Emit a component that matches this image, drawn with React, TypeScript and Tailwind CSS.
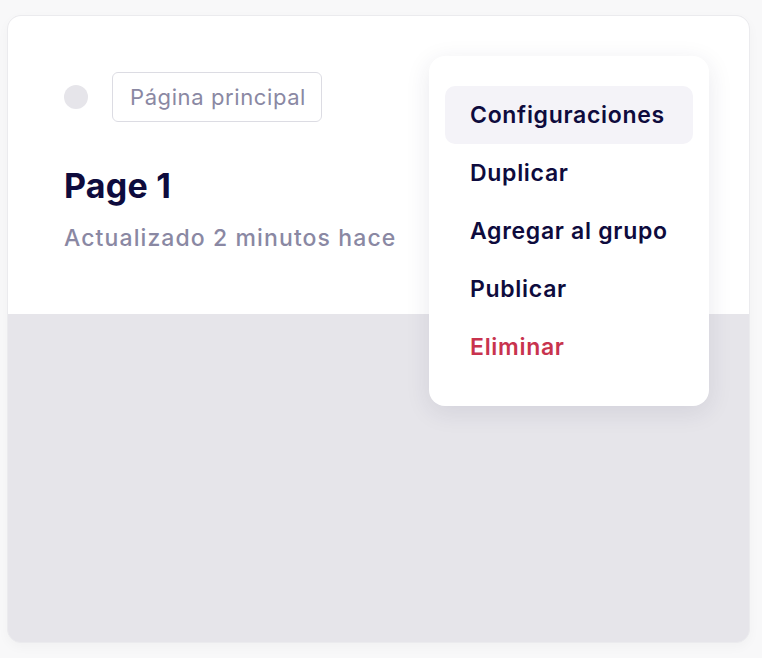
export default function App() {
  const items = [
    { label: "Configuraciones", active: true },
    { label: "Duplicar" },
    { label: "Agregar al grupo" },
    { label: "Publicar" },
    { label: "Eliminar", danger: true },
  ];
  return (
    <div
      className="w-[762px] h-[658px] bg-[#f8f8f9] pt-[15px] pl-[7px]"
      style={{ fontFamily: "Inter, 'Noto Sans', sans-serif" }}
    >
      <div className="relative w-[743px] h-[628px] rounded-[14px] border border-[#ebebee] overflow-hidden flex flex-col bg-[#e6e5ea] shadow-[0_4px_12px_rgba(0,0,0,0.03)]">
        <div className="h-[298px] bg-white pl-[56px] pt-[56px] flex flex-col">
          <div className="flex items-center gap-[24px]">
            <div className="w-[24px] h-[24px] rounded-full bg-[#e6e5ea]" />
            <div className="h-[50px] pl-[17px] pr-[15px] flex items-center rounded-[6px] border-[1.5px] border-[#dcdce3] text-[22px] tracking-[0.6px] text-[#8a88a3]">
              Página principal
            </div>
          </div>
          <div className="mt-[44px] text-[34px] font-bold text-[#0e0b3d] leading-[40px] tracking-[0.2px]">
            Page 1
          </div>
          <div className="mt-[18px] text-[23px] font-medium text-[#8a88a3] leading-[28px] tracking-[1.1px]">
            Actualizado 2 minutos hace
          </div>
        </div>
        <div className="flex-1" />
        <div className="absolute left-[421px] top-[40px] w-[280px] rounded-[16px] bg-white shadow-[0_6px_24px_rgba(40,40,80,0.10)] px-[16px] pt-[30px] pb-[30px] flex flex-col">
          {items.map((it) => (
            <div
              key={it.label}
              className={`h-[58px] rounded-[10px] pl-[25px] flex items-center text-[23px] font-semibold tracking-[0.7px] ${
                it.active ? "bg-[#f4f3f8]" : ""
              } ${it.danger ? "text-[#c8334e]" : "text-[#0e0b3d]"}`}
            >
              {it.label}
            </div>
          ))}
        </div>
      </div>
    </div>
  );
}
